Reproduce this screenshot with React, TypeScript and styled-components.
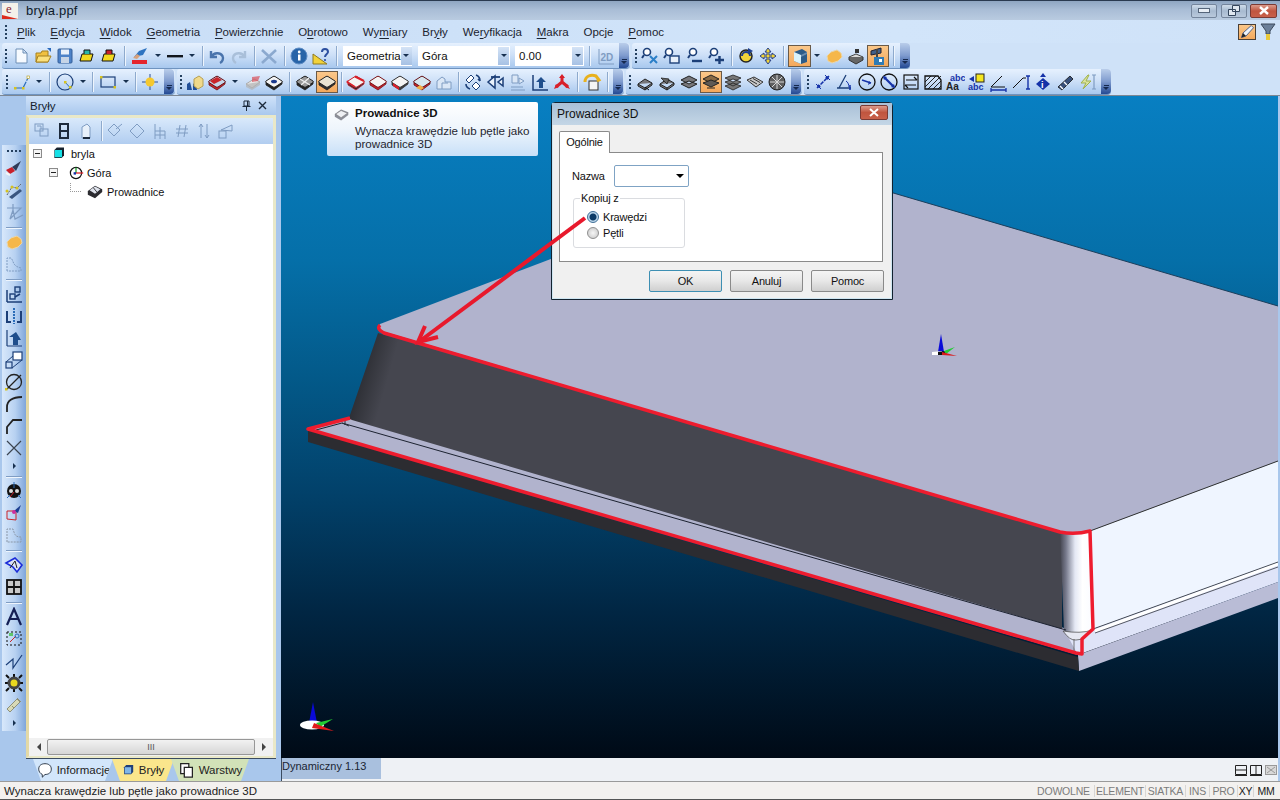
import React from 'react';
import styled, { createGlobalStyle } from 'styled-components';

const Global = createGlobalStyle`
  html, body { margin: 0; padding: 0; height: 800px; overflow: hidden; background: #cfe2f8; }
  #root { height: 800px; }
  * { box-sizing: border-box; }
`;

const Page = styled.div`
  width: 1280px; height: 800px; display: flex; flex-direction: column;
  font-family: "Liberation Sans", Arial, sans-serif; font-size: 11.5px; color: #111;
  background: #cfe2f8;
`;
const TitleBar = styled.div`
  height: 20px; display: flex; align-items: center; padding: 0 3px 0 2px;
  border-top: 1px solid #2a3a50;
  background: linear-gradient(#8fa6c2, #a9bdd6 45%, #b9cbe0);
`;
const TitleText = styled.span`
  margin-left: 8px; font-size: 13px; color: #0d1a2a; flex: 1; letter-spacing: .2px;
`;
const WinBtn = styled.div<{ $close?: boolean }>`
  width: ${p => (p.$close ? 27 : 26)}px; height: 14px; margin-left: ${p => (p.$close ? 3 : 4)}px;
  display: flex; align-items: center; justify-content: center;
  border: 1px solid ${p => (p.$close ? '#7a3a34' : '#74859c')}; border-radius: 2px;
  background: ${p => (p.$close ? 'linear-gradient(#dc9b8c, #c0553f 50%, #c8604a)' : 'linear-gradient(#cfdcea, #a7bad0 50%, #b9c9dc)')};
`;
const MenuRow = styled.div`
  height: 23px; display: flex; align-items: center; padding: 0 0 0 3px;
  background: linear-gradient(90deg, #c8ddf6, #d2e5fa 70%, #cfe2f8);
`;
const VGrip = styled.div<{ $w?: number }>`
  width: ${p => p.$w ?? 8}px; flex: none; display: flex; justify-content: center; align-items: center; align-self: stretch;
  &::before {
    content: ""; width: 2px; height: 14px;
    background: repeating-linear-gradient(#24405f 0 2px, transparent 2px 4px);
  }
`;
const MenuList = styled.div`
  display: flex; gap: 14.8px; margin-left: 8px; flex: 1; color: #1c2430;
  u { text-underline-offset: 2px; }
`;
const MenuToggle = styled.div`
  width: 18px; height: 16px; flex: none; display: flex; align-items: center; justify-content: center;
  background: linear-gradient(#fbc98c, #f3a75a); outline: 1px solid #4a4038; outline-offset: -1px;
`;
const MenuFunnel = styled.div`
  width: 24px; height: 20px; flex: none; display: flex; align-items: center; justify-content: center;
`;
const ToolRow = styled.div<{ $h: number }>`
  height: ${p => p.$h}px; display: flex; gap: 2px; padding-left: 2px; align-items: stretch;
`;
const Band = styled.div<{ $w: number }>`
  width: ${p => p.$w}px; flex: none; display: flex; align-items: center; border-radius: 3px 4px 4px 3px;
  background: linear-gradient(#e6f1fe, #cfe1f8 45%, #a8c8ee);
  border-bottom: 1px solid #6f93bf;
`;
const Btn = styled.div<{ $w?: number; $on?: boolean; $ml?: number }>`
  width: ${p => p.$w ?? 22}px; height: 22px; flex: none; margin-left: ${p => p.$ml ?? 0}px;
  display: flex; align-items: center; justify-content: center;
  ${p => p.$on ? 'background: linear-gradient(#fbc98c, #f3a75a); outline: 1px solid #6a5a48; outline-offset: -1px;' : ''}
`;
const Drop = styled.div<{ $w?: number; $on?: boolean }>`
  width: ${p => p.$w ?? 12}px; height: 22px; flex: none; display: flex; align-items: center; justify-content: center;
  ${p => p.$on ? 'background: linear-gradient(#fbc98c, #f3a75a); outline: 1px solid #6a5a48; outline-offset: -1px;' : ''}
  &::before { content: ""; border: 3px solid transparent; border-top: 3px solid #17304f; border-bottom: 0; }
`;
const Sep = styled.div<{ $w?: number }>`
  width: ${p => p.$w ?? 8}px; flex: none; display: flex; justify-content: center;
  &::before { content: ""; width: 1px; height: 20px; background: #8eaacd; box-shadow: 1px 0 #eef5fd; }
`;
const Chev = styled.div<{ $ml?: number }>`
  width: 10px; align-self: stretch; flex: none; margin-left: ${p => p.$ml ?? 0}px; border-radius: 0 4px 4px 0;
  background: linear-gradient(#b9cdea, #7f9bce 50%, #234a94);
  display: flex; flex-direction: column; justify-content: flex-end; align-items: center; padding-bottom: 4px;
  &::before { content: ""; width: 5px; height: 1px; background: #15294f; margin-bottom: 1px; }
  &::after { content: ""; border: 3px solid transparent; border-top: 3px solid #15294f; border-bottom: 0; }
`;
const Combo = styled.div<{ $w: number; $ml?: number }>`
  width: ${p => p.$w}px; height: 20px; margin-left: ${p => p.$ml ?? 0}px; flex: none; background: #fff;
  display: flex; align-items: center; justify-content: space-between; padding-left: 4px; white-space: nowrap;
`;
const ComboText = styled.span`
  flex: 1;
`;
const ComboBtn = styled.div`
  width: 11px; height: 18px; flex: none; margin-right: 1px; background: linear-gradient(#d4e3f6, #a6c1e4);
  display: flex; align-items: center; justify-content: center;
  &::before { content: ""; border: 3px solid transparent; border-top: 3px solid #17304f; border-bottom: 0; }
`;
const Main = styled.div`
  flex: 1; display: flex; min-height: 0; background: #a9c7ec; border-top: 1px solid #7d8793;
`;
const LeftDock = styled.div`
  width: 26px; flex: none; padding-top: 49px; padding-left: 2px; background: #a9c7ec;
`;
const LeftBar = styled.div`
  width: 24px; height: 586px; display: flex; flex-direction: column; align-items: center;
  background: linear-gradient(90deg, #d8e8fb, #b7d1f1 55%, #7fa6da);
`;
const HGrip = styled.div`
  width: 100%; height: 12px; flex: none; display: flex; justify-content: center; align-items: center;
  &::before { content: ""; width: 14px; height: 2px; background: repeating-linear-gradient(90deg, #24405f 0 2px, transparent 2px 4px); }
`;
const HSep = styled.div`
  height: 8px; width: 100%; flex: none; display: flex; align-items: center; justify-content: center;
  &::before { content: ""; height: 1px; width: 16px; background: #7f9dc4; box-shadow: 0 1px #eef5fd; }
`;
const MoreArrow = styled.div<{ $h?: number }>`
  height: ${p => p.$h ?? 13}px; flex: none; width: 100%; display: flex; align-items: center; justify-content: center;
  &::before { content: ""; border: 3px solid transparent; border-left: 3px solid #17304f; border-right: 0; }
`;
const Panel = styled.div`
  width: 255px; flex: none; display: flex; flex-direction: column;
`;
const PanelHead = styled.div`
  height: 19px; display: flex; align-items: center; padding: 0 9px 0 4px; gap: 7px; width: 250px;
  background: linear-gradient(#cfe2f9, #a9c8ee); color: #14202e;
`;
const PanelTitle = styled.span`flex: 1;`;
const PanelBox = styled.div`
  width: 250px; flex: 1; min-height: 0; display: flex; flex-direction: column;
  border: 3px solid #e9e8c8; border-left: 3px solid #e3d9a6; border-bottom-width: 2px;
`;
const PanelTools = styled.div`
  height: 26px; display: flex; align-items: center; padding-left: 2px;
  background: linear-gradient(#d9e9fb, #b1cdf0);
`;
const Tree = styled.div`
  flex: 1; background: #fff; color: #111; font-size: 11px;
`;
const TreeRow = styled.div<{ $pad: number }>`
  height: 19px; display: flex; align-items: center; padding-left: ${p => p.$pad}px; gap: 3px;
`;
const Expander = styled.div`
  width: 9px; height: 9px; border: 1px solid #8b8b8b; background: #f4f4f4; margin-right: 7px; display: flex; align-items: center; justify-content: center;
  &::before { content: ""; width: 5px; height: 1px; background: #222; }
`;
const Dots = styled.div`
  width: 11px; height: 9px; border-left: 1px dotted #999; border-bottom: 1px dotted #999; margin-bottom: 8px; margin-right: 2px;
`;
const ScrollBar = styled.div`
  height: 18px; display: flex; align-items: center; background: #f1f1f1; padding: 0 1px;
`;
const ScrollArrow = styled.div<{ $right?: boolean }>`
  width: 17px; flex: none; display: flex; justify-content: center;
  &::before { content: ""; border: 4px solid transparent; ${p => (p.$right ? 'border-left: 4px solid #444; border-right: 0;' : 'border-right: 4px solid #444; border-left: 0;')} }
`;
const ScrollThumb = styled.div`
  flex: 1; height: 16px; border: 1px solid #979797; border-radius: 2px; background: linear-gradient(#f2f2f2, #d6d6d6);
  display: flex; align-items: center; justify-content: center; font-size: 9px; color: #555;
`;
const Tabs = styled.div`
  height: 23px; display: flex; padding-left: 7px; border-top: 1px solid #3b4b60; width: 250px;
`;
const Tab = styled.div<{ $bg: string; $w: number; $ml?: number }>`
  width: ${p => p.$w}px; margin-left: ${p => p.$ml ?? 0}px; height: 22px; display: flex; align-items: center; justify-content: center; gap: 3px;
  background: ${p => p.$bg}; font-size: 11.5px; color: #222;
  clip-path: polygon(0 0, 100% 0, calc(100% - 8px) 100%, 8px 100%);
`;
const ViewCol = styled.div`
  flex: 1; display: flex; flex-direction: column; margin-right: 2px; min-width: 0;
`;
const Scene = styled.div`
  flex: 1; position: relative; overflow: hidden;
  background: linear-gradient(#087fc2 0, #056fa8 25%, #035a8a 42%, #02416a 60%, #012643 78%, #000a16 100%);
`;
const SceneArt = styled.svg`
  position: absolute; left: 0; top: 0; width: 997px; height: 661px;
`;
const ArrowArt = styled(SceneArt)`
  z-index: 3; pointer-events: none;
`;
const Strip = styled.div`
  height: 23px; display: flex; align-items: center; background: #eef1f5; border-left: 1px solid #3b4b60;
`;
const StripTab = styled.div`
  width: 99px; height: 21px; align-self: flex-start; background: #a9c0de; color: #1a2533; font-size: 11px; line-height: 17px; white-space: nowrap;
`;
const StripIcons = styled.div`
  margin-left: auto; display: flex; gap: 2px; align-items: center;
`;
const Status = styled.div`
  height: 19px; display: flex; align-items: center; padding: 0 2px 0 4px;
  background: #f3f1ef; border-top: 1px solid #9a9a9a; border-bottom: 1px solid #555; color: #222;
`;
const StatusMsg = styled.span`flex: 1;`;
const StatusCell = styled.span<{ $on?: boolean; $w: number }>`
  width: ${p => p.$w}px; text-align: center; color: ${p => (p.$on ? '#1a1a1a' : '#7c7c7c')}; font-size: 10.5px; letter-spacing: -.2px;
  border-right: 1px solid #d8d6d4; white-space: nowrap;
  &:last-child { border-right: 0; }
`;
const Tooltip = styled.div`
  position: absolute; left: 46px; top: 6px; width: 211px; height: 54px; z-index: 1; border-radius: 2px;
  background: linear-gradient(#ffffff, #eef5fc 50%, #c8e0f8);
  display: grid; grid-template-columns: 22px 1fr; grid-template-rows: 15px 1fr; padding: 4px 0 0 6px; color: #1f2630; font-size: 11.6px;
`;
const TipTitle = styled.div`
  font-weight: 700; height: 15px; line-height: 15px; color: #111; font-size: 11.5px;
`;
const TipText = styled.div`
  grid-column: 2; line-height: 13px; margin-top: 3px;
`;
const Dialog = styled.div`
  position: absolute; left: 270px; top: 6px; width: 342px; height: 198px; z-index: 2; display: flex; flex-direction: column;
  border: 1px solid #12222f; border-radius: 4px 4px 0 0; background: #cfe6f2; padding: 0 1px 1px 1px;
`;
const DlgTitle = styled.div`
  height: 22px; flex: none; display: flex; align-items: center; justify-content: space-between; margin: 0 -1px; padding: 0 4px 0 5px;
  background: linear-gradient(#a9c0d7, #c4d6e6); font-size: 12px; color: #111;
`;
const DlgClose = styled.div`
  width: 28px; height: 15px; border: 1px solid #7a3a34; border-radius: 2px; margin-top: -3px; background: linear-gradient(#dc9b8c, #c0553f 50%, #c8604a);
  display: flex; align-items: center; justify-content: center;
`;
const DlgBody = styled.div`
  flex: 1; background: #f0f0f0; padding: 6px 8px 0 6px; display: flex; flex-direction: column; font-size: 11px; letter-spacing: -.2px;
`;
const DlgTabs = styled.div`
  height: 22px; display: flex; flex: none; position: relative; z-index: 1; margin-bottom: -1px;
`;
const DlgTab = styled.div`
  width: 51px; border: 1px solid #8a8a8a; border-bottom: 0; background: #fff; text-align: center; line-height: 21px; border-radius: 2px 2px 0 0;
`;
const DlgPane = styled.div`
  height: 110px; flex: none; border: 1px solid #8a8a8a; background: #fff; padding: 11px 0 0 12px;
`;
const NameRow = styled.div`
  display: flex; align-items: center; height: 23px;
`;
const NameLabel = styled.span`
  width: 42px; flex: none;
`;
const NameSelect = styled.div`
  width: 75px; height: 22px; border: 1px solid #7fa3c4; border-radius: 2px; display: flex; align-items: center; justify-content: flex-end; padding-right: 4px;
  &::after { content: ""; border: 4px solid transparent; border-top: 4px solid #000; border-bottom: 0; }
`;
const Group = styled.fieldset`
  width: 112px; height: 56px; margin: 5px 0 0 1px; padding: 5px 0 0 13px; border: 1px solid #dadce0; border-radius: 3px;
  display: flex; flex-direction: column;
`;
const GroupLabel = styled.legend`
  padding: 0 1px; margin-left: -7px; line-height: 12px;
`;
const RadioRow = styled.label`
  display: flex; align-items: center; height: 16px; gap: 4px;
`;
const Radio = styled.span<{ $on?: boolean }>`
  width: 12px; height: 12px; border-radius: 50%; border: 1px solid ${p => (p.$on ? '#3f6f97' : '#8f8f8f')}; background: ${p => (p.$on ? 'radial-gradient(circle, #0d3b66 0 3px, #bcd7ec 4px)' : 'radial-gradient(circle, #f6f6f6, #c4c4c4)')};
`;
const DlgActions = styled.div`
  display: flex; justify-content: flex-end; gap: 8px; margin-top: 8px; margin-right: -1px;
`;
const DlgBtn = styled.div<{ $def?: boolean }>`
  width: 73px; height: 22px; border: 1px solid ${p => (p.$def ? '#3d8fb3' : '#8a8a8a')}; border-radius: 2px; text-align: center; line-height: 20px;
  background: linear-gradient(#f4f4f4, #e8e8e8 48%, #cfcfcf);
`;
const IconBox = styled.svg<{ $s?: number }>`
  width: ${p => p.$s ?? 20}px; height: ${p => p.$s ?? 20}px; flex: none; display: block;
`;

type IP = { children: React.ReactNode; s?: number };
const S = ({ children, s }: IP) => <IconBox $s={s} viewBox="0 0 20 20" fill="none">{children}</IconBox>;
const N = '#1c3f78';
const G = '#7f9cc2';

const slab = (top: string, side: string, edge = '#222') => (
  <>
    <path d="M2 10 L10 15 L18 10 L18 12 L10 18 L2 13Z" fill={side} stroke={edge} strokeWidth=".8" />
    <path d="M2 9 Q1 10 2 10.5 L9 15 Q10 15.5 11 15 L18 10.5 Q19 10 18 9 L11 4.5 Q10 4 9 4.5Z" fill={top} stroke={edge} strokeWidth="1" />
  </>
);
const Sheet = () => <path d="M3 12 L10 7 L17 11 L10 16Z M3 12 L3 14 L10 18 L17 13 L17 11 M10 16 L10 18" fill="#77777b" stroke="#222" strokeWidth="1" />;
const icons: Record<string, React.ReactNode> = {
  doc: <path d="M5 3h7l4 4v10H5z M12 3v4h4" fill="#f6faff" stroke="#6f8fb5" />,
  open: <><path d="M3 7h5l1-2h6v11H3z" fill="#f0c040" stroke="#a5801f" /><path d="M3 16l2-6h13l-3 6z" fill="#fbe07c" stroke="#a5801f" /><path d="M14 2h4v4z" fill="#2c6bbd" /></>,
  save: <><rect x="3" y="3" width="14" height="14" rx="1" fill="#4d82c8" stroke="#345f99" /><rect x="6" y="3.5" width="8" height="5" fill="#e8f0fa" /><rect x="6" y="11" width="8" height="6" fill="#c6d4e6" /></>,
  ylw: <><path d="M3 15l2-7h11l-2 7z" fill="#f2d91f" stroke="#111" /><path d="M7 8V4h6v4" fill="#2bb6a8" stroke="#111" /></>,
  red: <><path d="M3 15l2-7h11l-2 7z" fill="#f2d91f" stroke="#111" /><path d="M7 8V4h6v4" fill="#c8202a" stroke="#111" /></>,
  paint: <><path d="M4 11 L9 5 L17 2 L13 9 Z" fill="#2f74c0" /><path d="M3 12 L7 8 L10 10 L7 13Z" fill="#d9a17a" /><rect x="2" y="14" width="15" height="4" fill="#e5252d" /></>,
  line: <rect x="2" y="9" width="16" height="2.4" fill="#10151c" />,
  undo: <path d="M4 5v6h6M4.5 10.5C7 6.5 13 6 15.5 10 17 13 15 16 13 17" stroke="#4a74ac" strokeWidth="2.4" />,
  redo: <path d="M16 5v6h-6M15.5 10.5C13 6.5 7 6 4.5 10 3 13 5 16 7 17" stroke="#a9bfd9" strokeWidth="2.4" />,
  del: <path d="M3 4 L17 17 M17 4 L3 17" stroke="#8ba9cf" strokeWidth="2.6" />,
  info: <><circle cx="10" cy="10" r="8" fill="#2864a8" stroke="#5e8cc4" /><rect x="9" y="8.5" width="2.5" height="6" fill="#fff" /><circle cx="10.2" cy="6" r="1.4" fill="#fff" /></>,
  ruler: <><path d="M2 8 L16 18 L2 18Z" fill="#f2d23a" stroke="#8e7a20" /><path d="M11 6c0-4 6-4 6 0 0 2-3 2-3 5" stroke="#2c4fa0" strokeWidth="2" /><circle cx="14" cy="14" r="1.1" fill="#2c4fa0" /></>,
  twoD: <><path d="M3 3v15h15" stroke={G} /><text x="4.5" y="15" fontSize="10" fontFamily="Liberation Sans" fill={G} fontWeight="700">2D</text></>,
  zfit: <><circle cx="7" cy="6" r="3.5" fill="#fff" stroke={N} strokeWidth="1.6" /><path d="M4 9l-2 3" stroke={N} strokeWidth="2" /><path d="M10 10l7 7M17 10l-7 7" stroke="#2a7fc8" strokeWidth="2" /></>,
  zwin: <><circle cx="7" cy="6" r="3.5" fill="#fff" stroke={N} strokeWidth="1.6" /><path d="M4 9l-2 3" stroke={N} strokeWidth="2" /><rect x="8" y="10" width="9" height="7" fill="#e8f0fa" stroke={N} strokeWidth="1.4" /></>,
  zout: <><circle cx="9" cy="6" r="3.5" fill="#fff" stroke={N} strokeWidth="1.6" /><path d="M6 9l-2 3" stroke={N} strokeWidth="2" /><path d="M8 15h10" stroke={N} strokeWidth="2.4" /></>,
  zin: <><circle cx="8" cy="6" r="3.5" fill="#fff" stroke={N} strokeWidth="1.6" /><path d="M5 9l-2 3" stroke={N} strokeWidth="2" /><path d="M9 14h9M13.5 10v8" stroke={N} strokeWidth="2.4" /></>,
  rot: <><circle cx="10" cy="10" r="6" fill="#f0d43a" stroke="#222" strokeWidth="1.5" /><path d="M6 10a4 4 0 0 1 8 0" stroke="#1e3f8e" strokeWidth="2" /><path d="M12 2l5 3-5 3z" fill="#1e3f8e" /></>,
  pan: <><path d="M10 2l3 4h-2v3h3V7l4 3-4 3v-2h-3v3h2l-3 4-3-4h2v-3H6v2l-4-3 4-3v2h3V6H7z" fill="#f0d43a" stroke="#27408b" /></>,
  cube: <><path d="M4 6l8-3 5 3v10l-6 2-7-3z" fill="#2d5b88" /><path d="M4 6l7 3v9l-7-3z" fill="#d9f2fb" /><path d="M11 9l6-3v2l-6 3z" fill="#6c8cad" /></>,
  blob: <path d="M3 10l4-4 6-2 4 3 1 4-4 4-6 2-4-2z" fill="#f5b74a" stroke="#e9d5a8" />,
  mach: <><path d="M3 11l7-3 7 3-7 4z" fill="#d9d9d9" stroke="#444" /><path d="M3 11v3l7 4 7-4v-3" fill="#666" stroke="#333" /><path d="M9 3h4v4H9z" fill="#333" /></>,
  macht: <><path d="M3 5l10-3v5L3 9z" fill="#3f5f8a" stroke="#223" /><rect x="8" y="3" width="2" height="9" fill="#444" /><rect x="6" y="11" width="10" height="8" fill="#2f7bb5" /><rect x="11" y="13" width="3" height="3" fill="#fff" /></>,
  pline: <><path d="M3 16h8l5-10" stroke="#2a6cb8" strokeWidth="1.2" strokeDasharray="7 1" /><rect x="2" y="15" width="2.5" height="2.5" fill="#d6c31f" /><rect x="10" y="15" width="2.5" height="2.5" fill="#d6c31f" /><rect x="15" y="4" width="2.5" height="2.5" fill="#fff" stroke="#b59a10" strokeWidth=".6" /></>,
  circ: <><circle cx="10" cy="10" r="8" stroke={N} strokeWidth="1.2" /><path d="M10 10l4.5 5" stroke="#2a6cb8" /><rect x="9" y="9" width="2.5" height="2.5" fill="#d6c31f" /><rect x="14" y="14" width="2.5" height="2.5" fill="#d6c31f" /></>,
  rect: <><rect x="3" y="5" width="14" height="10" stroke={N} strokeWidth="1.2" /><rect x="2" y="4" width="2.5" height="2.5" fill="#d6c31f" /><rect x="15.5" y="14" width="2.5" height="2.5" fill="#d6c31f" /></>,
  sun: <><path d="M10 2v16M2 10h16" stroke="#2a4f98" /><rect x="5.5" y="5.5" width="9" height="9" rx="4.5" fill="#f5c82e" /></>,
  bino: <><path d="M2 12l3-2 2 8H2zM8 12l3-2 1 8H8z" fill="#214f98" /><path d="M9 7l5-3 4 3v7l-5 3-4-3z" fill="#f0d98a" stroke="#b7a052" /></>,
  slabR: <>{slab('#c6d7ea', '#c9252a', '#661216')}<path d="M3 9l7-4 5 3-8 4z" fill="#c9252a" /></>,
  slabP: <><path d="M3 12l8-5 6 3-8 6z" fill="#e9e9e9" stroke="#aaa" /><path d="M9 5l8-1-2 5-6 1z" fill="#d8505a" opacity=".7" /><path d="M3 12v3l6 3 8-5v-3" fill="#b2b2b2" opacity=".7" /></>,
  slabH: <>{slab('#f4f4f4', '#222')}<ellipse cx="10" cy="9.5" rx="3" ry="1.8" fill="#1b3a8c" /></>,
  slabX: <>{slab('#9a9a9a', '#222')}<path d="M5 7l10 6M14 6L6 13" stroke="#eee" strokeWidth="1.3" /></>,
  slabW: slab('#e9e3d2', '#2e2e30'),
  slabRw: <>{slab('#f4f4f4', '#2c2c30', '#c6202a')}<path d="M2 9 Q1 10 2 10.5 L9 15" stroke="#d8202a" strokeWidth="2" /><path d="M9 4.5 L18 9" stroke="#d8202a" strokeWidth="2" /></>,
  slabRb: <>{slab('#f4f4f4', '#c6202a', '#7a1418')}</>,
  slabBw: <>{slab('#f4f4f4', '#3a3a3e', '#333')}<path d="M3 11l6 4v3l-6-4z" fill="#d8202a" /></>,
  slabY: <>{slab('#d6e7f0', '#c9252a', '#661216')}<path d="M4 16l5 2 3-2-4-3z" fill="#f0b04a" /></>,
  ghost: <path d="M3 17V9l5-4 3 2v3h6v7z M8 17v-6h6" stroke={G} fill="#dbe7f6" />,
  arrows: <><path d="M3 8l5-5 3 3-5 5z" stroke={N} fill="#fff" /><path d="M9 14l4-4 4 4-4 4z" stroke={N} fill="#fff" /><path d="M13 3c3 1 4 3 4 6M17 9l-2-2" stroke={N} strokeWidth="1.6" /><path d="M7 17c-3-1-4-3-4-5" stroke={N} strokeWidth="1.6" /></>,
  arrowsB: <><path d="M3 10l7-6v12z" fill="#eaf2fb" stroke={N} strokeWidth="1.5" /><path d="M18 6l-5 4 5 4z" fill="#eaf2fb" stroke={N} strokeWidth="1.5" /><path d="M6 5h9" stroke={N} strokeWidth="1.8" /></>,
  ghostU: <><path d="M4 15h12M4 18h14M5 3h6v8H5zM12 6l5 3-5 3z" stroke={G} fill="#dbe7f6" /></>,
  backL: <><path d="M3 3v15h15" stroke={N} strokeWidth="1.5" /><path d="M11 5l-5 5h3v6h4v-6h3z" fill="#1f4e8c" /></>,
  tri: <><path d="M10 10V4M10 10L4 15M10 10l6 5" stroke="#d8202a" strokeWidth="3" /><path d="M10 2l3 4H7zM2 17l2-5 3 3zM18 17l-5-2 2-3z" fill="#d8202a" /></>,
  cubeArr: <><rect x="7" y="9" width="9" height="9" fill="#f5f5f5" stroke="#333" /><path d="M3 10c0-6 6-8 11-6l3 4-2 1" stroke="#e8b11e" strokeWidth="3" /></>,
  ply1: <><Sheet /><path d="M10 15l4 3" stroke="#111" /></>,
  ply2: <><Sheet /><path d="M4 6l8 1-2 5z" fill="#666" stroke="#222" strokeWidth=".8" /></>,
  ply3: <><path d="M2 8l8-4 8 4-8 4z M2 12l8 4 8-4-8-3z" fill="#77777b" stroke="#222" /></>,
  ply4: <><path d="M2 7l8-4 8 4-8 4z" fill="#8a6a44" stroke="#222" /><path d="M2 11l8 4 8-4-8-3z" fill="#5f5a55" stroke="#222" /><path d="M6 16h8" stroke="#222" /></>,
  ply5: <><path d="M2 6l8-3 8 3-8 4z M2 10l8 4 8-4-8-3z M2 14l8 4 8-4-8-3z" fill="#777" stroke="#222" strokeWidth=".8" /></>,
  ply6: <path d="M2 8l7-3 9 5-7 5z M5 8l7 4M8 6.5l7 4" fill="#c8c8c8" stroke="#333" />,
  wheel: <><circle cx="10" cy="10" r="8" fill="#5f5f5f" stroke="#222" /><path d="M10 3v14M3 10h14M5 5l10 10M15 5L5 15" stroke="#d9d9d9" /></>,
  dim: <><path d="M4 16l12-12" stroke="#1532a8" strokeWidth="1.5" strokeDasharray="4 1" /><path d="M3 12l5 5M12 3l5 5" stroke="#1532a8" /><path d="M4 16l4-1-3-3zM16 4l-4 1 3 3z" fill="#1532a8" /></>,
  ang: <><path d="M2 16h14M4 16l7-13" stroke={N} strokeWidth="1.3" /><path d="M11 9c2 1 3 4 3 6" stroke="#1532a8" /><path d="M15 18v-5" stroke="#1532a8" strokeWidth="1.5" /></>,
  cirA: <><circle cx="10" cy="10" r="8" stroke="#111" strokeWidth="1.3" /><path d="M5 8l9 3" stroke="#1532a8" strokeWidth="1.4" /><path d="M14 11l-3 2 1-4z" fill="#1532a8" /></>,
  cirD: <><circle cx="10" cy="10" r="8" stroke="#111" strokeWidth="1.3" /><path d="M5 5l10 10" stroke="#1532a8" strokeWidth="2.2" /><path d="M4 4l4 1-3 3zM16 16l-4-1 3-3z" fill="#1532a8" /></>,
  swap: <><rect x="3" y="3" width="14" height="14" stroke="#111" strokeWidth="1.2" /><path d="M5 8h11M16 8l-3-3M15 13H4M4 13l3 3" stroke="#111" strokeWidth="1.2" /></>,
  hatch: <><path d="M2 4h13l3 4v9H2z" stroke="#111" strokeWidth="1.3" /><path d="M2 10l6-6M2 15l11-11M5 17l13-13M10 17l8-8M15 17l3-3" stroke="#111" strokeWidth=".9" /></>,
  abc: <><text x="5" y="9" fontSize="9" fontFamily="Liberation Sans" fontWeight="700" fill="#1532a8">abc</text><text x="1" y="18" fontSize="10" fontFamily="Liberation Sans" fontWeight="700" fill="#222">Aa</text></>,
  abcY: <><rect x="9" y="2" width="8" height="8" fill="#f5e61f" stroke="#222" /><path d="M2 7l5-3v6z" fill="#1532a8" /><text x="1" y="18" fontSize="9" fontFamily="Liberation Sans" fontWeight="700" fill="#1532a8">abc</text></>,
  angB: <><path d="M2 15l11-11" stroke="#111" /><path d="M2 15h14" stroke="#111" /><path d="M2 18h15M2 16v4M17 16v4" stroke="#1532a8" strokeWidth="1.3" /></>,
  angS: <><path d="M2 16L12 6h3" stroke="#111" /><path d="M17 4v13M15 4h4M15 17h4" stroke="#1532a8" strokeWidth="1.4" /></>,
  infoA: <><path d="M10 6l-7 6 7 6 7-6z" fill="#1532a8" /><path d="M10 1l3 4H7z" fill="#1532a8" /><text x="8" y="16" fontSize="9" fontWeight="700" fontFamily="Liberation Sans" fill="#fff">i</text></>,
  wrench: <><path d="M3 15L15 4l3 3L7 18z" fill="#39507a" stroke="#111" strokeWidth=".8" /><path d="M5 14l3 3M9 10l3 3" stroke="#fff" strokeWidth="1.4" /></>,
  bolt: <><path d="M11 3L4 11h5l-3 6 8-8H9l3-6z" stroke="#a0b24a" fill="#dbe39f" /><path d="M17 3v14M15 3h4M15 17h4" stroke={G} strokeWidth="1.2" /></>,
  brush: <><path d="M2 12l6-3 3 4-5 3z" fill="#c9202a" /><path d="M8 9l9-6-5 10z" fill="#2e3b58" /><path d="M2 15l4 2" stroke="#f5f5f5" strokeWidth="2" /></>,
  points: <><path d="M3 15L8 7l5 1 4-4" stroke="#5f5f5f" strokeDasharray="2 1" /><path d="M5 17l11-8 2 2-10 8z" fill="#3a567f" /><circle cx="8" cy="7" r="1.5" fill="#d6c31f" /><circle cx="3" cy="11" r="1.5" fill="#d6c31f" /><circle cx="13" cy="8" r="1.5" fill="#d6c31f" /></>,
  star: <path d="M3 6h14L6 17l3-9 2 9 8-4M9 2v10" stroke={G} strokeWidth="1.2" />,
  prof: <path d="M3 17V4h4c3 3 1 8 10 10v3z" stroke={G} strokeDasharray="2 1" />,
  cp: <><path d="M3 18V6M3 18h15" stroke={N} strokeWidth="1.5" /><rect x="6" y="10" width="5" height="5" stroke={N} strokeWidth="1.4" /><rect x="11" y="3" width="5" height="5" stroke={N} strokeWidth="1.4" /><path d="M11 13l5-3" stroke={N} strokeWidth="1.6" /></>,
  mid: <><path d="M3 5v11h4M17 5v11h-4" stroke={N} strokeWidth="2" /><path d="M10 2v16" stroke="#2a6cb8" strokeWidth="2" strokeDasharray="2 1" /></>,
  off: <><path d="M3 18h15M3 2v16" stroke={N} strokeWidth="1.2" /><path d="M12 4l-7 5h4v8h5v-5h3z" fill="#1f4e8c" /></>,
  two: <><rect x="9" y="2" width="9" height="8" fill="#fff" stroke={N} strokeWidth="1.2" /><rect x="2" y="12" width="6" height="6" stroke={N} strokeWidth="1.2" /><path d="M2 12l7-6M8 18l10-8" stroke={N} /></>,
  dia: <><circle cx="10" cy="10" r="7.5" stroke="#222" strokeWidth="1.3" /><path d="M3 17L17 3" stroke="#222" strokeWidth="1.3" /><rect x="1" y="16" width="2.5" height="2.5" fill="#d6c31f" /></>,
  arc: <path d="M3 18V13C3 7 8 3 18 3" stroke="#222" strokeWidth="1.8" />,
  arc2: <path d="M3 18V11L9 4h9" stroke="#222" strokeWidth="1.8" />,
  cross: <path d="M3 3l14 14M17 3L3 17" stroke="#3b4450" strokeWidth="1.2" />,
  helmet: <><circle cx="10" cy="10" r="7" fill="#111" /><path d="M10 1v6M6 14l-3 3M14 14l3 3" stroke="#2a6cb8" /><circle cx="7" cy="10" r="2" fill="#ddd" /><circle cx="13" cy="10" r="2" fill="#ddd" /><path d="M10 11l-4 5" stroke="#c9252a" /></>,
  brushB: <><path d="M3 16V8h9v9z" stroke="#c9252a" /><path d="M10 8l7-6-3 8z" fill="#1d3f90" /><circle cx="10" cy="9" r="2" fill="#cc2d9e" /></>,
  prof2: <path d="M3 17V4h6c2 7 3 8 8 8v5z" stroke="#8a97a8" strokeDasharray="2 1" />,
  leaf: <><path d="M2 8l9-5 7 7-5 7-4-5z" fill="#dbe3f7" stroke="#1a2bd8" strokeWidth="1.6" /><path d="M6 13l5-7 2 7" stroke="#222" /></>,
  grid: <><rect x="3" y="3" width="14" height="14" fill="#c9c9c9" stroke="#111" strokeWidth="1.8" /><path d="M10 3v14M3 10h14" stroke="#111" strokeWidth="1.8" /></>,
  a: <path d="M3 18L10 2l7 16M6 12h8" stroke="#141f55" strokeWidth="2.2" />,
  sel: <><rect x="3" y="3" width="14" height="13" stroke="#111" strokeDasharray="2 2" /><path d="M6 13l6-6" stroke="#c9252a" /><rect x="5" y="4" width="4" height="3" fill="#5fc66a" /><circle cx="13" cy="7" r="2" stroke="#2a6cb8" /></>,
  zig: <path d="M2 14L9 8v9L18 4" stroke="#1c3f78" strokeWidth="1.2" />,
  gear: <><path d="M2 2l3 3M18 2l-3 3M2 18l3-3M18 18l-3-3M10 1v3M10 16v3M1 10h3M16 10h3" stroke="#111" strokeWidth="2" /><circle cx="10" cy="10" r="6.5" fill="#444" /><circle cx="10" cy="10" r="3.5" fill="#e9d81f" /></>,
  probe: <><path d="M3 14L13 4l3 3L6 17z" fill="#d8d9b6" stroke="#8e9078" /><path d="M13 3l4 4M8 11l2 2" stroke="#8e9078" /></>,
};
const Ico = ({ n, s }: { n: string; s?: number }) => <S s={s}>{icons[n]}</S>;

const B = ({ n, w, on, ml }: { n: string; w?: number; on?: boolean; ml?: number }) => (
  <Btn $w={w} $on={on} $ml={ml}><Ico n={n} /></Btn>
);

const MENU: [string, string, string][] = [
  ['', 'P', 'lik'], ['', 'E', 'dycja'], ['', 'W', 'idok'], ['', 'G', 'eometria'], ['', 'P', 'owierzchnie'], ['O', 'b', 'rotowo'],
  ['Wy', 'm', 'iary'], ['Br', 'y', 'ły'], ['We', 'r', 'yfikacja'], ['', 'M', 'akra'], ['Opcje', '', ''], ['', 'P', 'omoc'],
];

export default function App() {
  return (
    <Page>
      <Global />
      <TitleBar>
        <S s={16}>
          <rect x="0" y="0" width="20" height="20" fill="#f4f1ea" />
          <text x="5" y="13" fontSize="16" fontFamily="Liberation Serif" fill="#8a2430">e</text>
          <path d="M0 15 L20 20 H0Z" fill="#dd2a1c" />
        </S>
        <TitleText>bryla.ppf</TitleText>
        <WinBtn><svg width="12" height="6"><rect x=".5" y=".5" width="11" height="4" fill="#e8eef5" stroke="#55657a" /></svg></WinBtn>
        <WinBtn><svg width="12" height="11"><path d="M4.5.5h7v6h-7zM.5 4.5h7v6h-7z" fill="#dfe7f0" stroke="#33455c" /></svg></WinBtn>
        <WinBtn $close><svg width="12" height="9"><path d="M2 1l8 7M10 1L2 8" stroke="#fff" strokeWidth="2.4" /></svg></WinBtn>
      </TitleBar>

      <MenuRow>
        <VGrip $w={6} />
        <MenuList>
          {MENU.map(([a, u, c], i) => <span key={i}>{a}{u && <u>{u}</u>}{c}</span>)}
        </MenuList>
        <MenuToggle><S s={15}><path d="M2 18l2-6L15 2l3 3L8 16z" fill="#eef3fa" stroke="#1f3f78" /><path d="M2 18l2-6 4 4z" fill="#222" /></S></MenuToggle>
        <MenuFunnel><S><path d="M3 2h14l-5 7v3H8V9z" fill="#6b7f99" stroke="#3c4a5c" /><rect x="8" y="12" width="4" height="6" fill="#e8c83a" /></S></MenuFunnel>
      </MenuRow>

      <ToolRow $h={26}>
        <Band $w={628}>
          <VGrip />
          <B n="doc" /><B n="open" /><B n="save" /><B n="ylw" /><B n="red" /><Sep $w={9} />
          <B n="paint" /><Drop $w={13} /><B n="line" /><Drop /><Sep />
          <B n="undo" /><B n="redo" /><Sep /><B n="del" /><Sep /><B n="info" /><B n="ruler" /><Sep />
          <Combo $w={69} $ml={3}><ComboText>Geometria</ComboText><ComboBtn /></Combo>
          <Combo $w={92} $ml={6}><ComboText>Góra</ComboText><ComboBtn /></Combo>
          <Combo $w={69} $ml={5}><ComboText>0.00</ComboText><ComboBtn /></Combo>
          <Sep $w={11} />
          <B n="twoD" />
          <Chev $ml={2} />
        </Band>
        <Band $w={278}>
          <VGrip $w={7} />
          <B n="zfit" /><B n="zwin" /><B n="zout" /><B n="zin" /><Sep />
          <B n="rot" /><B n="pan" /><Sep $w={9} />
          <B n="cube" on w={23} /><Drop on />
          <B n="blob" /><B n="mach" /><B n="macht" on /><Sep />
          <Chev $ml={3} />
        </Band>
      </ToolRow>

      <ToolRow $h={26}>
        <Band $w={173}>
          <VGrip $w={9} />
          <B n="pline" /><Drop /><Sep />
          <B n="circ" w={24} /><Drop /><Sep $w={7} />
          <B n="rect" w={24} /><Drop /><Sep $w={7} />
          <B n="sun" />
          <Chev $ml={3} />
        </Band>
        <Band $w={447}>
          <VGrip $w={7} />
          <B n="bino" /><B n="slabR" /><Drop $w={14} /><B n="slabP" w={21} /><B n="slabH" /><Sep />
          <B n="slabX" ml={1} /><B n="slabW" on /><Sep $w={7} />
          <B n="slabRw" /><B n="slabRb" /><B n="slabBw" /><B n="slabY" /><B n="ghost" /><Sep $w={7} />
          <B n="arrows" /><B n="arrowsB" /><B n="ghostU" /><B n="backL" ml={1} /><B n="tri" /><Sep />
          <B n="cubeArr" /><Sep />
          <Chev $ml={2} />
        </Band>
        <Band $w={176}>
          <VGrip />
          <B n="ply1" /><B n="ply2" /><B n="ply3" /><B n="ply4" on /><B n="ply5" /><B n="ply6" /><B n="wheel" />
          <Chev $ml={3} />
        </Band>
        <Band $w={307}>
          <VGrip />
          <B n="dim" /><B n="ang" /><B n="cirA" /><B n="cirD" /><B n="swap" /><B n="hatch" /><B n="abc" /><B n="abcY" /><B n="angB" /><B n="angS" /><B n="infoA" /><B n="wrench" /><B n="bolt" />
          <Chev $ml={3} />
        </Band>
      </ToolRow>

      <Main>
        <LeftDock>
          <LeftBar>
            <HGrip />
            <B n="brush" /><B n="points" /><B n="star" /><HSep />
            <B n="blob" /><B n="prof" /><HSep />
            <B n="cp" /><B n="mid" /><B n="off" /><B n="two" /><B n="dia" /><B n="arc" /><B n="arc2" /><B n="cross" />
            <MoreArrow /><HSep />
            <B n="helmet" /><B n="brushB" /><B n="prof2" /><HSep />
            <B n="leaf" /><B n="grid" /><HSep />
            <B n="a" /><B n="sel" /><B n="zig" /><B n="gear" /><B n="probe" />
            <MoreArrow $h={14} />
          </LeftBar>
        </LeftDock>
        <Panel>
          <PanelHead>
            <PanelTitle>Bryły</PanelTitle>
            <svg width="9" height="11"><path d="M2 1h5v5H2zM.5 6.5h8M4.5 7v4M5.5 1v5" fill="none" stroke="#1c2a3c" /></svg>
            <svg width="9" height="9"><path d="M1 1l7 7M8 1L1 8" stroke="#1c2a3c" strokeWidth="1.4" /></svg>
          </PanelHead>
          <PanelBox>
            <PanelTools>
              <Btn><S><rect x="3" y="3" width="8" height="7" stroke={G} /><rect x="8" y="8" width="8" height="7" stroke={G} /><path d="M5 5h4v3" stroke={G} /></S></Btn>
              <Btn><S><path d="M6 3h8v14H6zM6 10h8" stroke="#1c2a3c" strokeWidth="2" /></S></Btn>
              <Btn><S><path d="M6 6l5-3 3 3v11H6z" stroke={G} fill="#e7f0fa" /><rect x="7" y="16" width="7" height="2" fill="#1c2a3c" /></S></Btn>
              <Sep />
              <Btn $ml={-1}><S><path d="M3 9l6-6 6 6-6 6zM11 8l6-5" stroke={G} /></S></Btn>
              <Btn><S><path d="M3 10l7-7 7 7-7 7z" stroke={G} /></S></Btn>
              <Btn $ml={1}><S><path d="M5 3v15M10 6v12M15 10v8M5 10h10M5 14h10" stroke={G} /></S></Btn>
              <Btn><S><path d="M8 4L6 16M14 4l-2 12M4 8h12M4 12h12" stroke={G} /></S></Btn>
              <Btn><S><path d="M7 3v14M13 3v14M5 6l2-3 2 3M11 14l2 3 2-3" stroke={G} /></S></Btn>
              <Btn><S><rect x="3" y="10" width="7" height="7" stroke={G} /><path d="M5 9l11-5v6z" stroke={G} /></S></Btn>
            </PanelTools>
            <Tree>
              <TreeRow $pad={4}>
                <Expander /><S s={16}><path d="M3 5l3-3h9v10l-3 3H3z" fill="#17222e" /><rect x="3.5" y="5" width="9" height="9" fill="#15e0e6" /></S><span>bryla</span>
              </TreeRow>
              <TreeRow $pad={20}>
                <Expander /><S s={16}><circle cx="10" cy="10" r="7" fill="#fff" stroke="#111" strokeWidth="1.5" /><path d="M10 10V3" stroke="#16a02a" strokeWidth="1.6" /><path d="M10 10h9" stroke="#d8202a" strokeWidth="1.6" /><rect x="7" y="9" width="3" height="3" fill="#1532a8" /></S><span>Góra</span>
              </TreeRow>
              <TreeRow $pad={41}>
                <Dots /><S s={18}><path d="M2 9l8-6 8 4 0 3-8 7-8-4z" fill="#2b2b30" /><path d="M4 8l6-4 6 3-6 5z" fill="#dfe3ec" /><path d="M8 5l4 5" stroke="#2b2b30" /></S><span>Prowadnice</span>
              </TreeRow>
            </Tree>
            <ScrollBar>
              <ScrollArrow />
              <ScrollThumb>III</ScrollThumb>
              <ScrollArrow $right />
            </ScrollBar>
          </PanelBox>
          <Tabs>
            <Tab $bg="#d2e6fb" $w={80}>
              <S s={18}><path d="M3 9c0-4 3-6 7-6s7 2 7 6-3 6-7 6l-3 3v-3c-2-1-4-3-4-6z" fill="#fff" stroke="#1e2a3a" /></S>Informacje
            </Tab>
            <Tab $bg="#fae68c" $w={62} $ml={-1}>
              <S s={14}><path d="M3 6l3-3h10v10l-3 3H3z" fill="#1f3f78" /><rect x="4" y="6" width="9" height="9" fill="#7fb6e8" /></S>Bryły
            </Tab>
            <Tab $bg="#d2e2b8" $w={78} $ml={-3}>
              <S s={18}><path d="M3 3h9v11H3z" fill="#fff" stroke="#222" strokeWidth="1.4" /><path d="M7 7h9v11H7z" fill="#fff" stroke="#222" strokeWidth="1.4" /></S>Warstwy
            </Tab>
          </Tabs>
        </Panel>
        <ViewCol>
          <Scene>
            <SceneArt viewBox="281 97 997 661">
              <defs>
                <linearGradient id="col" x1="1060" x2="1090" y1="0" y2="0" gradientUnits="userSpaceOnUse">
                  <stop offset="0" stopColor="#44454f" />
                  <stop offset=".2" stopColor="#777a8c" />
                  <stop offset=".5" stopColor="#e4e8f4" />
                  <stop offset=".75" stopColor="#ffffff" />
                  <stop offset="1" stopColor="#fbfcff" />
                </linearGradient>
                <linearGradient id="dk" x1="350" x2="385" y1="380" y2="390" gradientUnits="userSpaceOnUse">
                  <stop offset="0" stopColor="#25272c" />
                  <stop offset="1" stopColor="#45464f" />
                </linearGradient>
              </defs>
              <path d="M380 325 L798 166 L1278 307 L1278 462 L1090 532 Q1075 536 1060 533 L385 333 Q376 330 380 325Z" fill="#b1b3cd" />
              <path d="M798 166 L1278 307" stroke="#1d3f5c" strokeWidth="1" />
              <path d="M308 430 L350 418 L1064 629 L1082 640 L1082 655 L1078 656Z" fill="#b1b3cd" />
              <path d="M378 334 L1062 534 L1062 630 L352 421 Q348 420 350 416Z" fill="url(#dk)" />
              <path d="M1090 532 L1278 462 L1278 563 L1093 630Z" fill="#eff5ff" />
              <path d="M1090 532 L1278 462" stroke="#333" strokeWidth="1" />
              <path d="M1093 630 L1278 563 L1278 583 L1078 656 L1066 634Z" fill="#dfe4f8" />
              <path d="M1095 632 L1278 565" stroke="#fff" strokeWidth="3" />
              <path d="M1093 630 L1278 563 M1095 634 L1278 568 M1084 654 L1278 584" stroke="#30333c" strokeWidth=".8" />
              <path d="M1078 656 L1278 583 L1278 599 L1079 672Z" fill="#b9bcd6" />
              <path d="M308 431 L1078 658 L1079 672 L308 443Z" fill="#2c2c31" />
              <path d="M1060 533 Q1075 536 1090 532 L1093 630 Q1080 638 1064 632Z" fill="url(#col)" />
              <path d="M1063 632 Q1070 642 1076 641 L1083 640 L1093 631 Q1080 635 1063 632Z" fill="#e6e8f2" stroke="#444" strokeWidth=".7" />
              <path d="M1074 640 L1074 654" stroke="#555" strokeWidth=".8" />
              <path d="M316 431 L342 424 L1066 631" stroke="#1c2230" strokeWidth="1" fill="none" />
              <path d="M345 420 L345 426 M342 424 L349 427" stroke="#2a2f3a" strokeWidth="1" />
              <path d="M380 326 Q376 330 384 334 L1060 533 Q1075 536 1090 532 L1093 630 L1082 640 L1082 655 L1076 654 L308 430 L350 419" fill="none" stroke="#ee1c2e" strokeWidth="3.5" strokeLinejoin="round" />
              <path d="M941 335 L944 353 L938 353Z" fill="#0a0ad8" />
              <path d="M932 353 L942 352 L942 356 L932 356Z" fill="#fff" />
              <path d="M938 353 L945 352 L946 356 L938 356Z" fill="#111" />
              <path d="M944 352 L955 348 L946 355Z" fill="#22cc33" />
              <path d="M942 353 L957 357 L942 356Z" fill="#d81a1a" />
              <path d="M313 703 L317 724 L309 724Z" fill="#0a0ad8" />
              <ellipse cx="312" cy="726" rx="12" ry="4.5" fill="#fff" />
              <path d="M316 724 L333 720 L320 728Z" fill="#22cc33" />
              <path d="M314 724 L334 732 L312 729Z" fill="#e01a1a" />
            </SceneArt>
            <Tooltip>
              <S s={18}><path d="M2 9l7-5 8 3v3l-8 6-7-4z" fill="#8c8f99" /><path d="M3 9l6-4 7 3-7 5z" fill="#eef0f4" stroke="#777" strokeWidth=".6" /></S>
              <TipTitle>Prowadnice 3D</TipTitle>
              <TipText>Wynacza krawędzie lub pętle jako prowadnice 3D</TipText>
            </Tooltip>
            <Dialog>
              <DlgTitle>
                <span>Prowadnice 3D</span>
                <DlgClose><svg width="12" height="9"><path d="M2 1l8 7M10 1L2 8" stroke="#fff" strokeWidth="2" /></svg></DlgClose>
              </DlgTitle>
              <DlgBody>
                <DlgTabs><DlgTab>Ogólnie</DlgTab></DlgTabs>
                <DlgPane>
                  <NameRow><NameLabel>Nazwa</NameLabel><NameSelect /></NameRow>
                  <Group>
                    <GroupLabel>Kopiuj z</GroupLabel>
                    <RadioRow><Radio $on />Krawędzi</RadioRow>
                    <RadioRow><Radio />Pętli</RadioRow>
                  </Group>
                </DlgPane>
                <DlgActions>
                  <DlgBtn $def>OK</DlgBtn>
                  <DlgBtn>Anuluj</DlgBtn>
                  <DlgBtn>Pomoc</DlgBtn>
                </DlgActions>
              </DlgBody>
            </Dialog>
            <ArrowArt viewBox="281 97 997 661">
              <path d="M585 219 L420 342" stroke="#e8192c" strokeWidth="4" fill="none" />
              <path d="M425 327 L418 343 L438 338" stroke="#e8192c" strokeWidth="4" fill="none" />
            </ArrowArt>
          </Scene>
          <Strip>
            <StripTab>Dynamiczny 1.13</StripTab>
            <StripIcons>
              <svg width="13" height="12"><path d="M.5 1.5h11v9h-11zM.5 6h11" fill="none" stroke="#222" /><path d="M0 11.5h12" stroke="#222" /></svg>
              <svg width="13" height="12"><path d="M.5 1.5h11v9h-11zM6 1.5v9" fill="none" stroke="#222" /><path d="M0 11.5h12" stroke="#222" /></svg>
              <svg width="13" height="12"><rect x=".5" y="1.5" width="11" height="9" fill="#d8d8d8" stroke="#999" /><path d="M2 3l8 6M10 3L2 9" stroke="#999" /></svg>
            </StripIcons>
          </Strip>
        </ViewCol>
      </Main>

      <Status>
        <StatusMsg>Wynacza krawędzie lub pętle jako prowadnice 3D</StatusMsg>
        <StatusCell $w={62}>DOWOLNE</StatusCell>
        <StatusCell $w={51}>ELEMENT</StatusCell>
        <StatusCell $w={40}>SIATKA</StatusCell>
        <StatusCell $w={24}>INS</StatusCell>
        <StatusCell $w={28}>PRO</StatusCell>
        <StatusCell $w={16} $on>XY</StatusCell>
        <StatusCell $w={24} $on>MM</StatusCell>
      </Status>
    </Page>
  );
}
